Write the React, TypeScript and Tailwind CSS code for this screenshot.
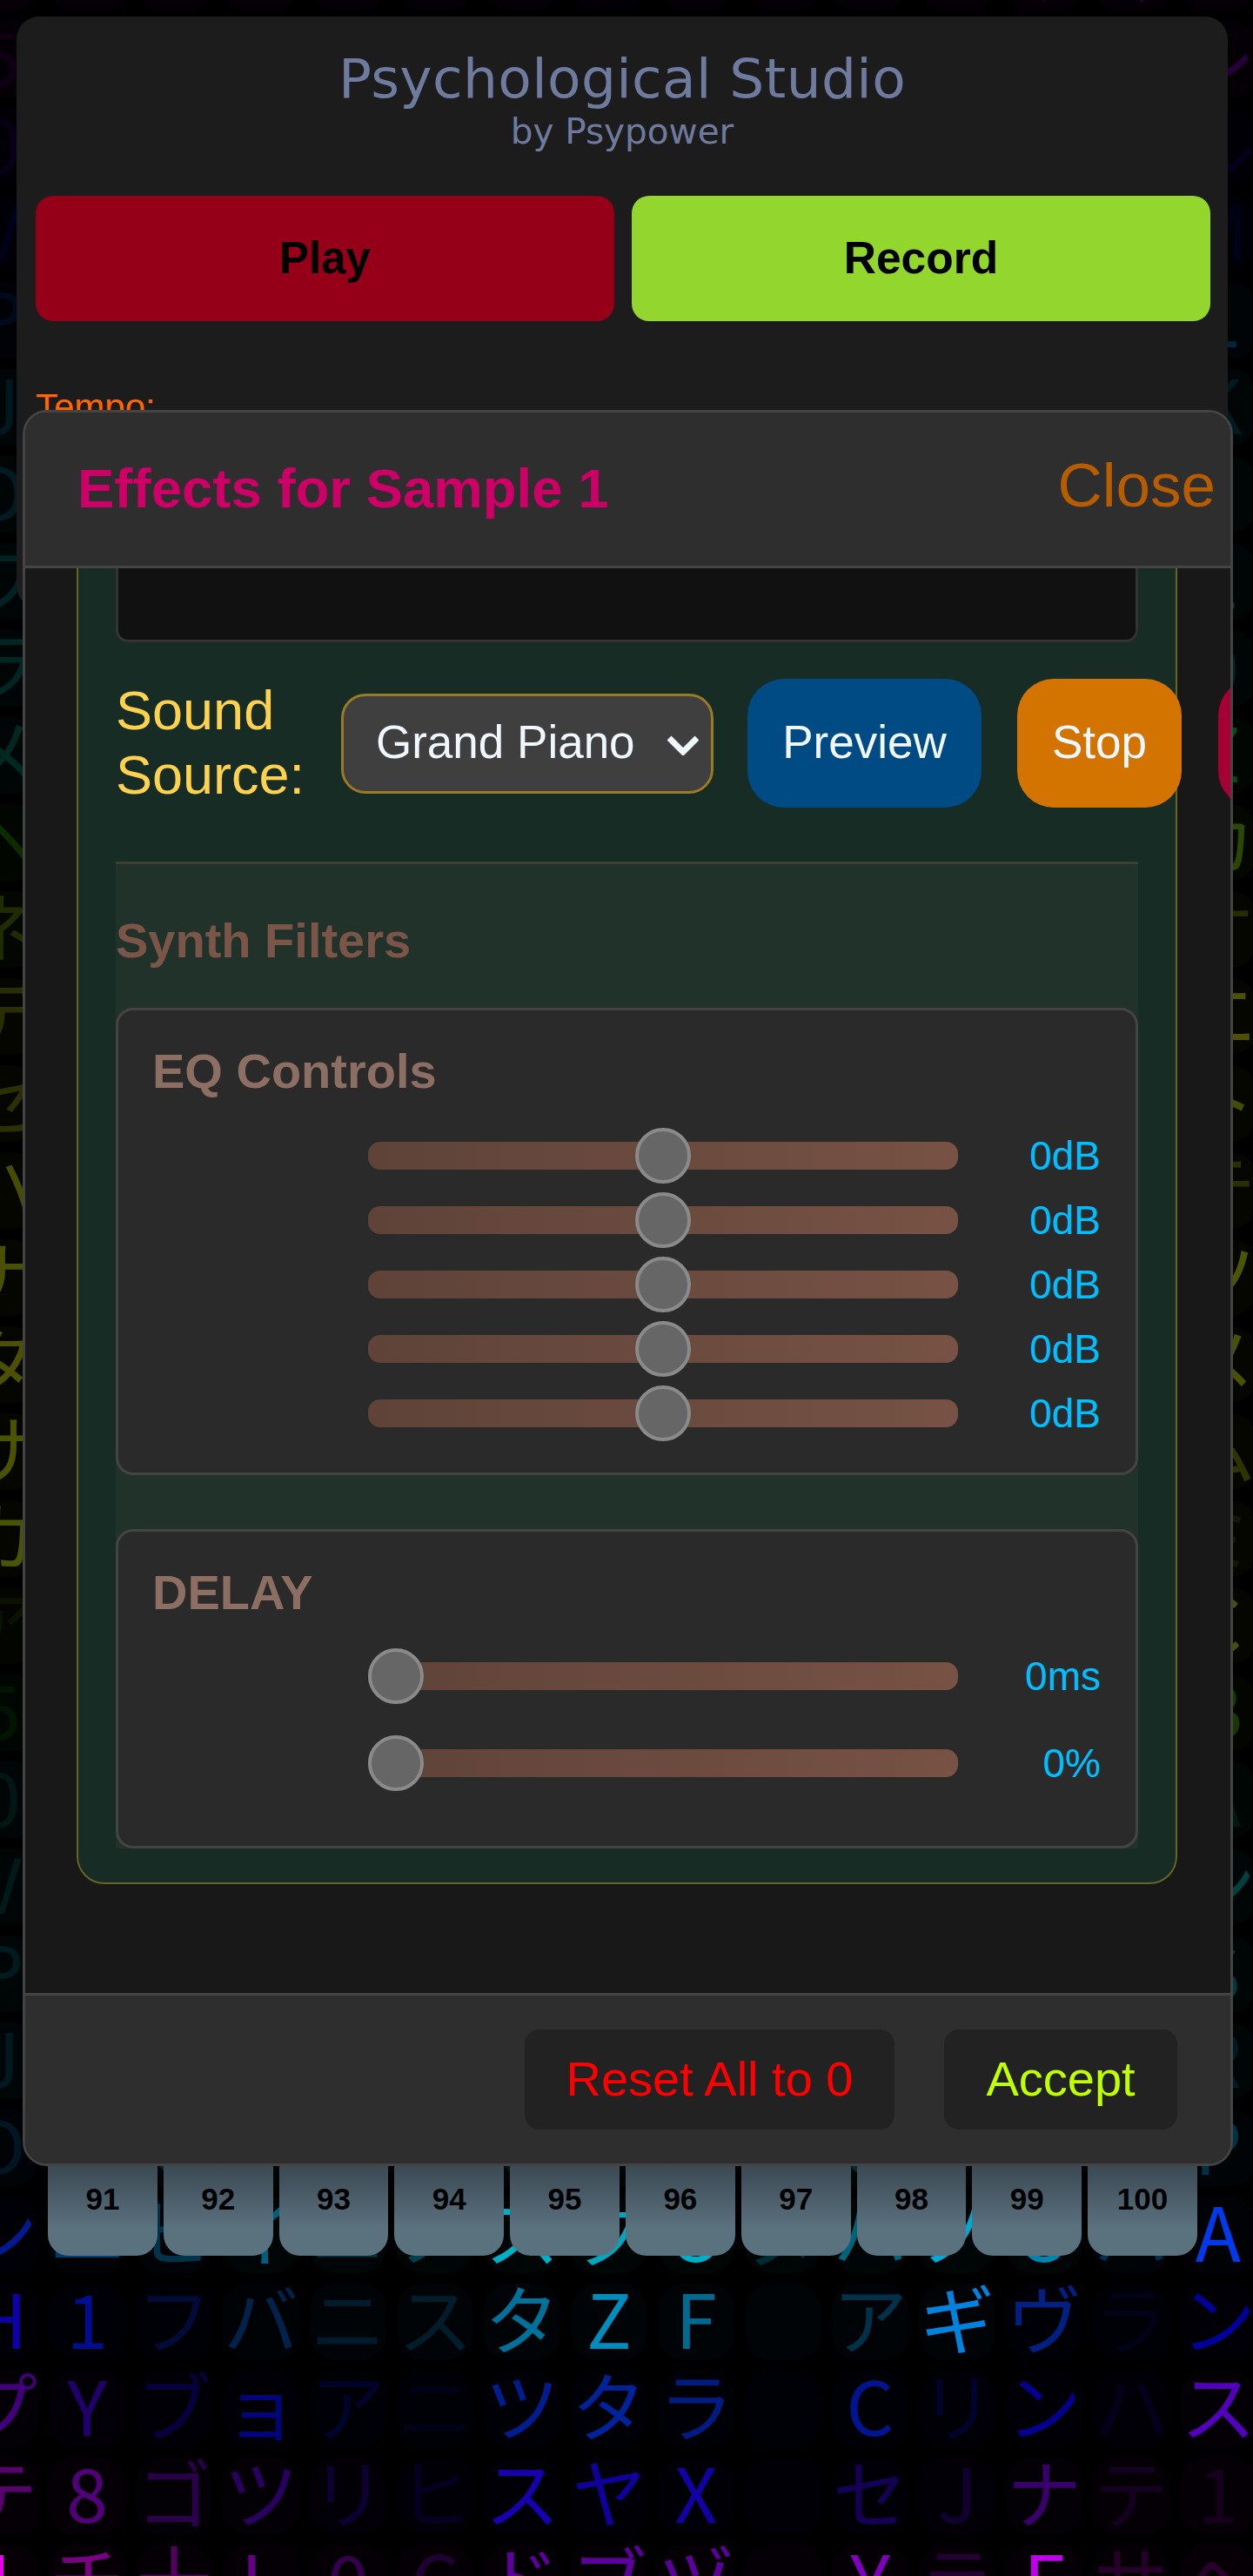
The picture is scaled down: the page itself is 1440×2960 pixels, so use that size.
import React from "react";

const KANA = "アイウエオカキクケコサシスセソタチツテトナニヌネノハヒフヘホマミムメモヤユヨラリルレロワンABCDEFGHJKLMNPRSTUVWXYZ0123456789".split("");

const TABLE: Record<number, [string, number][]> = {
  26: [["ン",.6],["ユ",.45],["ヒ",.3],["イ",.5],["ニ",.25],["ノ",.3],["ス",.85],["ク",.8],["O",.85],["ヌ",.2],["ハ",.5],["ノ",.9],["O",.75],["ハ",.3],["A",1]],
  27: [["H",.7],["1",.6],["フ",.22],["バ",.3],["ニ",.16],["ス",.16],["タ",.65],["Z",.8],["F",.6],[" ",0],["ア",.3],["ギ",.95],["ヴ",.55],["ラ",.08],["ン",.65]],
  28: [["プ",.5],["Y",.45],["ブ",.25],["ョ",.5],["ア",.16],["ニ",.08],["ツ",.6],["タ",.65],["ラ",.55],[" ",0],["C",.6],["リ",.16],["ン",.6],["ハ",.1],["ス",.8]],
  29: [["テ",.45],["8",.5],["ゴ",.3],["ツ",.4],["リ",.2],["ヒ",.12],["ス",.75],["ヤ",.65],["X",.7],[" ",0],["セ",.35],["J",.2],["ナ",.45],["テ",.12],["1",.1]],
  30: [["I",1],["チ",.55],["十",.4],["L",.55],["0",.3],["C",.2],["ド",.65],["ブ",.65],["ヅ",.65],[" ",0],["Y",.8],["ラ",.2],["F",1],["サ",.16],["ヘ",.16]],
};

const STOPS: [number, number][] = [[780,65],[860,95],[920,165],[1000,178],[1220,195],[1278,205],[1310,225],[1400,240],[1460,258],[1500,272],[1600,290],[1680,300]];

function hueAt(x: number, y: number) {
  const d = Math.hypot(x - 720, y - 1480);
  if (d <= STOPS[0][0]) return STOPS[0][1];
  for (let i = 1; i < STOPS.length; i++) {
    if (d <= STOPS[i][0]) {
      const [d0, h0] = STOPS[i - 1];
      const [d1, h1] = STOPS[i];
      return h0 + ((h1 - h0) * (d - d0)) / (d1 - d0);
    }
  }
  return 300;
}

function Matrix() {
  const rows = [];
  for (let r = 0; r <= 30; r++) {
    const cells = [];
    for (let c = 0; c < 15; c++) {
      const seed = (r * 73 + c * 151 + r * c * 17) % 997;
      const t = TABLE[r];
      const ch = t ? t[c][0] : KANA[seed % KANA.length];
      const a = t ? t[c][1] : 0.06 + ((seed * 7) % 30) / 100;
      const hue = hueAt(c * 100, r * 100);
      cells.push(
        <div key={c} className="relative w-[100px] h-[100px] shrink-0 text-center text-[86px] leading-[100px]">
          <span
            className="absolute left-[6px] top-[12px] w-[88px] h-[88px] rounded-[30px]"
            style={{ backgroundColor: `hsl(${hue} 100% 50% / 0.022)` }}
          />
          <span className="relative" style={{ color: `hsl(${hue} 100% 46% / ${a})` }}>{ch}</span>
        </div>
      );
    }
    rows.push(<div key={r} className="flex">{cells}</div>);
  }
  return (
    <div className="absolute -left-[50px] -top-[88px] font-['Noto_Sans_CJK_JP','Noto_Sans',sans-serif]">
      {rows}
    </div>
  );
}

function Slider({ value, left, rowH }: { value: string; left: number; rowH: string }) {
  return (
    <div className={`flex items-center ${rowH}`}>
      <div className="relative ml-[287px] w-[678px] h-[32px] rounded-[14px] bg-[linear-gradient(90deg,#5f4338,#775245)]">
        <span
          className="absolute top-[-16px] w-[64px] h-[64px] rounded-full border-[4px] border-[#8a8a8a] bg-[#666666]"
          style={{ left }}
        />
      </div>
      <div className="w-[164px] text-right text-[46px] text-[#00bfff]">{value}</div>
    </div>
  );
}

export default function App() {
  const keys = [91, 92, 93, 94, 95, 96, 97, 98, 99, 100];
  return (
    <div className="relative h-[2960px] overflow-hidden bg-black pt-[19px] font-['Liberation_Sans',Arial,sans-serif]">
      <Matrix />

      <div className="relative ml-[19px] h-[680px] w-[1392px] rounded-[26px] bg-[#1c1c1c] pt-[35px]">
        <div className="text-center font-['DejaVu_Sans',sans-serif] text-[#6e7b9e]">
          <div className="text-[63px] leading-[73px] tracking-[0.35px]">Psychological Studio</div>
          <div className="text-[40.5px] leading-[49px]">by Psypower</div>
        </div>
        <div className="mt-[49px] flex gap-[20px] pl-[22px] pr-[20px]">
          <button className="h-[144px] flex-1 rounded-[20px] bg-[#950018] text-[51px] font-bold text-black">Play</button>
          <button className="h-[144px] flex-1 rounded-[20px] bg-[#92d62e] text-[51.5px] font-bold text-black">Record</button>
        </div>
        <div className="mt-[75px] pl-[22px] text-[42px] leading-[48px] text-[#ff6600]">Tempo:</div>
      </div>

      <div className="relative ml-[55px] mt-[1763px] flex w-[1321px] gap-[7px]">
        {keys.map((k) => (
          <div
            key={k}
            className="flex h-[130px] flex-1 items-center justify-center rounded-[24px] bg-[linear-gradient(#2f3a42,#5a717e_75%)] text-[35px] font-bold text-black"
          >
            {k}
          </div>
        ))}
      </div>

      <div className="absolute left-[26px] top-[471px] flex h-[2018px] w-[1391px] flex-col overflow-hidden rounded-[28px] border-[3px] border-[#444444] bg-[#181818]">
        <div className="flex h-[179px] shrink-0 items-center justify-between border-b-[3px] border-[#444444] bg-[#2e2e2e] pl-[60px] pr-[17px]">
          <div className="text-[63.5px] font-bold text-[#cc0066]">Effects for Sample 1</div>
          <button className="pb-[8px] text-[71px] text-[#b85c00]">Close</button>
        </div>

        <div className="min-h-0 flex-1 overflow-hidden">
          <div className="-mt-[40px] ml-[59px] w-[1265px] rounded-[32px] border-[2px] border-[#66661f] bg-[#162c25] px-[43px] pb-[39px]">
            <div className="h-[123px] rounded-b-[14px] border-[3px] border-[#333333] bg-[#111111]" />

            <div className="mt-[42px] flex h-[148px] items-center">
              <div className="-mt-[3px] w-[259px] shrink-0 text-[63px] leading-[74px] text-[#ffd24d]">Sound<br />Source:</div>
              <div className="flex h-[115px] w-[428px] shrink-0 items-center justify-between rounded-[28px] border-[3px] border-[#9a7a24] bg-[#3f3f3f] pb-[2px] pl-[37px] pr-[14px] text-[53px] text-[#f0f8ff]">
                <span>Grand Piano</span>
                <svg width="36" height="24" viewBox="0 0 36 24" className="mt-[6px]">
                  <polyline points="2,4 18,20 34,4" fill="none" stroke="#f0f8ff" strokeWidth="7" />
                </svg>
              </div>
              <button className="ml-[39px] h-[148px] w-[269px] shrink-0 rounded-[42px] bg-[#004b84] pb-[2px] text-[53px] text-[#f0f8ff]">Preview</button>
              <button className="ml-[41px] h-[148px] w-[189px] shrink-0 rounded-[42px] bg-[#d37300] pb-[2px] text-[53px] text-[#f0f8ff]">Stop</button>
              <button className="ml-[42px] h-[148px] w-[200px] shrink-0 rounded-[42px] bg-[#a50036] text-[53px] text-[#f0f8ff]">Delete</button>
            </div>

            <div className="mt-[62px] border-t-[3px] border-[#3a4034] bg-[#20322a] pt-[53px]">
              <div className="text-[56px] font-bold leading-[70px] text-[#7a5548]">Synth Filters</div>

              <div className="mt-[42px] h-[537px] rounded-[20px] border-[3px] border-[#444444] bg-[#2a2a2a] pt-[38px]">
                <div className="pl-[39px] text-[56px] font-bold leading-[64px] text-[#8d6e63]">EQ Controls</div>
                <div className="mt-[28px]">
                  {[0, 1, 2, 3, 4].map((i) => (
                    <Slider key={i} value="0dB" left={307} rowH="h-[74px]" />
                  ))}
                </div>
              </div>

              <div className="mt-[62px] h-[367px] rounded-[20px] border-[3px] border-[#444444] bg-[#2a2a2a] pt-[38px]">
                <div className="pl-[39px] text-[56px] font-bold leading-[64px] text-[#8d6e63]">DELAY</div>
                <div className="mt-[14px]">
                  <Slider value="0ms" left={0} rowH="h-[100px]" />
                  <Slider value="0%" left={0} rowH="h-[100px]" />
                </div>
              </div>
            </div>
          </div>
        </div>

        <div className="flex h-[196px] shrink-0 items-center justify-end gap-[57px] border-t-[3px] border-[#444444] bg-[#2e2e2e] pr-[61px]">
          <button className="h-[115px] w-[425px] rounded-[17px] bg-[#222222] pb-[2px] text-[56px] text-[#ff0000]">Reset All to 0</button>
          <button className="h-[115px] w-[268px] rounded-[17px] bg-[#222222] pb-[2px] text-[56px] text-[#bfff00]">Accept</button>
        </div>
      </div>
    </div>
  );
}
